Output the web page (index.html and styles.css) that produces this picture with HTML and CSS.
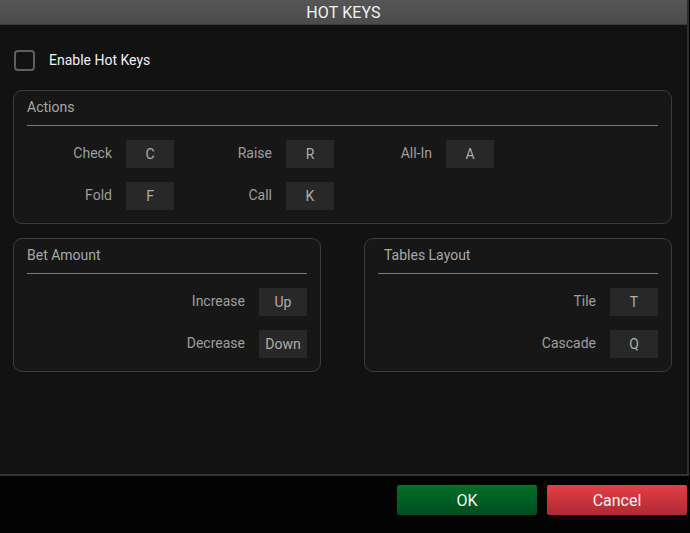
FILE: index.html
```html
<!DOCTYPE html>
<html>
<head>
<meta charset="utf-8">
<link rel="stylesheet" href="styles.css">
</head>
<body>
<div class="dialog">
  <div class="header">HOT KEYS</div>
  <div class="content">
    <label class="enable">
      <span class="checkbox"></span>
      <span class="enable-text">Enable Hot Keys</span>
    </label>

    <div class="group actions">
      <div class="group-title">Actions</div>
      <div class="group-line"></div>
      <div class="action-grid">
        <div class="cell"><span class="lbl">Check</span><span class="key">C</span></div>
        <div class="cell"><span class="lbl">Raise</span><span class="key">R</span></div>
        <div class="cell"><span class="lbl">All-In</span><span class="key">A</span></div>
        <div class="cell"><span class="lbl">Fold</span><span class="key">F</span></div>
        <div class="cell"><span class="lbl">Call</span><span class="key">K</span></div>
      </div>
    </div>

    <div class="bottom-groups">
      <div class="group half">
        <div class="group-title">Bet Amount</div>
        <div class="group-line"></div>
        <div class="rows">
          <div class="row"><span class="lbl">Increase</span><span class="key">Up</span></div>
          <div class="row"><span class="lbl">Decrease</span><span class="key">Down</span></div>
        </div>
      </div>
      <div class="group half">
        <div class="group-title indent">Tables Layout</div>
        <div class="group-line"></div>
        <div class="rows">
          <div class="row"><span class="lbl">Tile</span><span class="key">T</span></div>
          <div class="row"><span class="lbl">Cascade</span><span class="key">Q</span></div>
        </div>
      </div>
    </div>
  </div>
</div>
<div class="footer">
  <button class="btn ok">OK</button>
  <button class="btn cancel">Cancel</button>
</div>
</body>
</html>
```

FILE: styles.css
```css
html, body {
  margin: 0;
  padding: 0;
  background: #030303;
  font-family: Roboto, "Liberation Sans", sans-serif;
  width: 690px;
  height: 533px;
  overflow: hidden;
}

.dialog {
  width: 687px;
  height: 474px;
  background: #121212;
  border-right: 2px solid #2e2e2e;
  border-bottom: 2px solid #333333;
  display: flex;
  flex-direction: column;
}

.header {
  height: 25px;
  line-height: 26px;
  box-sizing: border-box;
  background: linear-gradient(#565656, #4b4b4b);
  border-bottom: 1px solid #3a3a3a;
  color: #f2f2f2;
  text-align: center;
  font-size: 16px;
  letter-spacing: 0.1px;
}

.content {
  padding: 24px 0 0 13px;
  display: flex;
  flex-direction: column;
}

.enable {
  display: flex;
  align-items: center;
  height: 22px;
  padding-left: 1px;
}

.checkbox {
  width: 21px;
  height: 21px;
  box-sizing: border-box;
  border: 2px solid #5e5e5e;
  border-radius: 4px;
}

.enable-text {
  margin-left: 14px;
  color: #f0f0f0;
  font-size: 14px;
}

.group {
  box-sizing: border-box;
  background: #171717;
  border: 1px solid #3c3c3c;
  border-radius: 9px;
  padding: 0 13px 13px 13px;
}

.actions {
  margin-top: 19px;
  width: 659px;
  height: 134px;
}

.group-title {
  color: #a8a8a8;
  font-size: 14px;
  height: 34px;
  line-height: 33px;
}

.group-title.indent {
  padding-left: 6px;
}

.group-line {
  height: 1px;
  background: #7a7a7a;
}

.action-grid {
  margin-left: -13px;
  margin-top: 14px;
  display: grid;
  grid-template-columns: 160px 160px 160px;
  row-gap: 14px;
}

.cell, .row {
  display: flex;
  align-items: center;
  justify-content: flex-end;
}

.lbl {
  color: #9e9e9e;
  font-size: 14px;
  margin-right: 14px;
  margin-top: -3px;
}

.key {
  width: 48px;
  height: 28px;
  line-height: 29px;
  background: #282828;
  color: #adadad;
  font-size: 14px;
  text-align: center;
}

.bottom-groups {
  margin-top: 14px;
  display: flex;
  gap: 43px;
}

.half {
  width: 308px;
  height: 134px;
}

.rows {
  margin-top: 14px;
  display: flex;
  flex-direction: column;
  gap: 14px;
}

.footer {
  display: flex;
  justify-content: flex-end;
  gap: 10px;
  padding: 9px 3px 0 0;
}

.btn {
  width: 140px;
  height: 30px;
  border: none;
  border-radius: 2px;
  color: #f4f4f4;
  font-family: Roboto, "Liberation Sans", sans-serif;
  font-size: 16px;
  padding: 0;
}

.ok {
  background: linear-gradient(#007028, #004c1c);
}

.cancel {
  background: linear-gradient(#e63e46, #ad2a32);
}
```
